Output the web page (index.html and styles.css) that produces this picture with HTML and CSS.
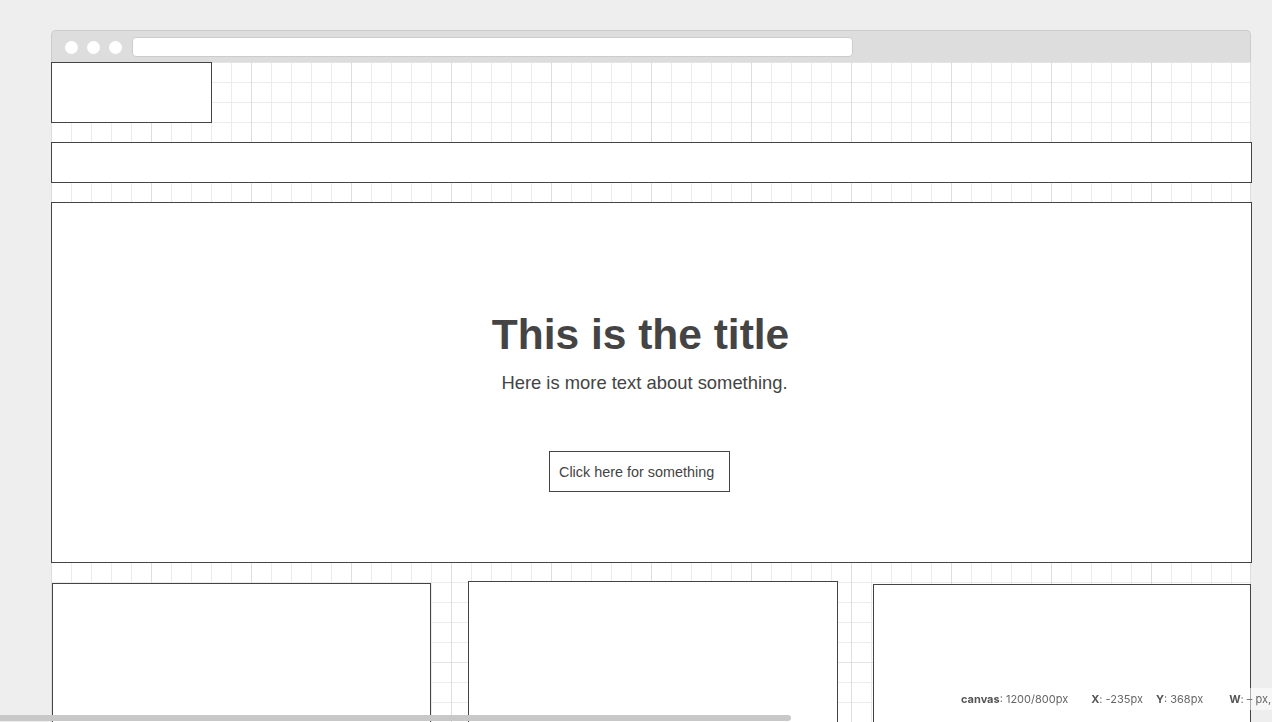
FILE: index.html
```html
<!DOCTYPE html>
<html lang="en">
<head>
<meta charset="UTF-8">
<meta name="viewport" content="width=device-width, initial-scale=1.0">
<title>Wireframe</title>
<link rel="stylesheet" href="styles.css">
</head>
<body>
<div class="frame">
    <div class="toolbar">
        <span class="dot"></span>
        <span class="dot"></span>
        <span class="dot"></span>
        <div class="url"></div>
    </div>
    <div class="canvas">
        <div class="logo"></div>
        <div class="nav"></div>
        <div class="hero">
            <h1 class="hero-title">This is the title</h1>
            <p class="hero-text">Here is more text about something.</p>
            <button class="hero-btn">Click here for something</button>
        </div>
        <div class="cards">
            <div class="card card-1"></div>
            <div class="card card-2"></div>
            <div class="card card-3"></div>
        </div>
    </div>
</div>

<div class="status">
    <span><b>canvas</b>: 1200/800px</span>
    <span><b>X</b>: -235px</span>
    <span><b>Y</b>: 368px</span>
    <span><b>W</b>: &ndash; px,</span>
</div>
<div class="scrollbar"></div>
</body>
</html>
```

FILE: styles.css
```css
html, body {
    margin: 0;
    height: 100%;
    overflow: hidden;
}

body {
    font-family: 'Liberation Sans', Arial, sans-serif;
    background-color: #eeeeee;
    color: #444;
}

.frame {
    margin: 30px 0 0 51px;
    width: 1200px;
}

.toolbar {
    height: 32px;
    background: #dddddd;
    border: 1px solid #cccccc;
    border-bottom: none;
    border-radius: 5px 5px 0 0;
    display: flex;
    align-items: center;
    padding: 1px 0 0 13px;
    box-sizing: border-box;
}

.dot {
    width: 13px;
    height: 13px;
    border-radius: 50%;
    background: #fff;
    margin-right: 9px;
}

.url {
    margin-left: 1px;
    width: 721px;
    height: 20px;
    background: #fff;
    border: 1px solid #cccccc;
    border-radius: 4px;
    box-sizing: border-box;
}

.canvas {
    height: 700px;
    background-color: #fff;
    background-image:
        linear-gradient(to right, #dedede 1px, transparent 1px),
        linear-gradient(to bottom, #e4e4e4 1px, transparent 1px),
        linear-gradient(to right, #ececec 1px, transparent 1px),
        linear-gradient(to bottom, #ececec 1px, transparent 1px);
    background-size: 100px 100px, 100px 100px, 20px 20px, 20px 20px;
    border-right: 1px solid #dddddd;
    box-shadow: inset 1px 0 0 #dddddd;
}

.logo, .nav, .hero, .card {
    background: #fff;
    border: 1px solid #444;
    box-sizing: border-box;
}

.logo {
    width: 161px;
    height: 61px;
}

.nav {
    width: 1201px;
    height: 41px;
    margin-top: 19px;
}

.hero {
    width: 1201px;
    height: 361px;
    margin-top: 19px;
    padding: 107px 22px 0 0;
    text-align: center;
}

.hero-title {
    margin: 0;
    font-size: 42.5px;
    line-height: 50px;
    font-weight: bold;
    color: #444;
}

.hero-text {
    margin: 12px 0 0 8px;
    font-size: 18.4px;
    line-height: 22px;
    color: #444;
}

.hero-btn {
    margin: 57px 0 0 -2px;
    width: 181px;
    height: 41px;
    padding: 0 9px;
    background: #fff;
    border: 1px solid #444;
    border-radius: 0;
    font-family: 'Liberation Sans', Arial, sans-serif;
    font-size: 14.4px;
    color: #444;
    text-align: left;
}

.cards {
    display: flex;
    align-items: flex-start;
}

.card {
    height: 200px;
    flex-shrink: 0;
}

.card-1 {
    width: 379px;
    margin: 20px 0 0 1px;
}

.card-2 {
    width: 370px;
    margin: 18px 0 0 37px;
}

.card-3 {
    width: 378px;
    margin: 21px 0 0 35px;
}

.status {
    position: fixed;
    left: 953px;
    top: 688px;
    height: 22px;
    padding: 0 8px;
    display: flex;
    align-items: center;
    white-space: nowrap;
    font-family: Inter, 'Liberation Sans', sans-serif;
    font-size: 11px;
    color: #666;
    background: rgba(255,255,255,0.55);
}

.status span {
    margin-right: 13px;
}

.status span:first-child {
    margin-right: 23px;
}

.status span:nth-child(3) {
    margin-right: 26px;
}

.status b {
    color: #555;
}

.scrollbar {
    position: fixed;
    left: 0;
    top: 715px;
    width: 791px;
    height: 6px;
    border-radius: 0 3px 3px 0;
    background: #c8c8c8;
}
```
